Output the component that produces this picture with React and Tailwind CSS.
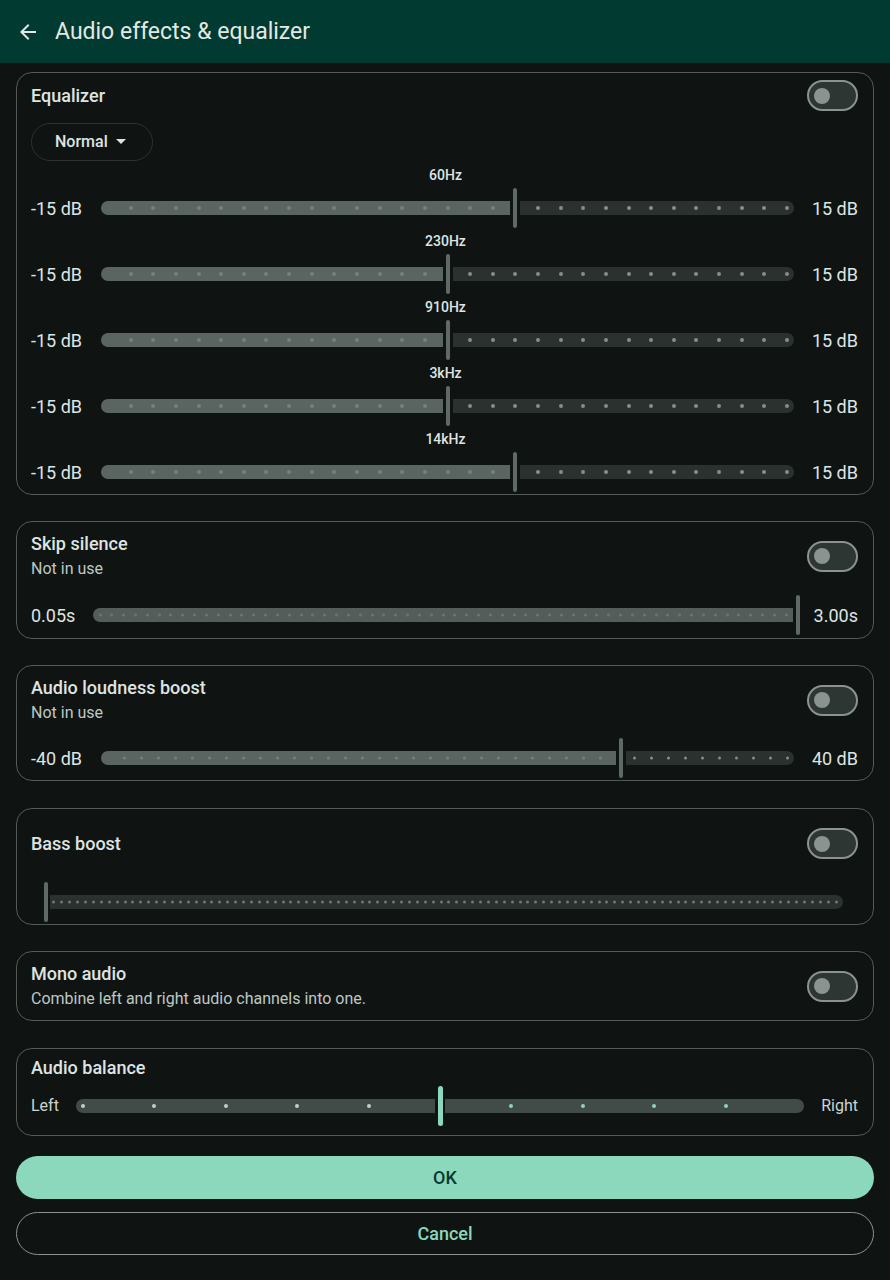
import React from "react";

function Slider({
  frac,
  steps,
  leftTrack,
  rightTrack,
  leftDot,
  rightDot,
  handleColor,
  handleW = 4,
  trackH = 14,
  gap = 5,
  dotSize = 4,
  hideFirst = false,
  hideLast = false,
}) {
  const pos = (p) => `calc(7px + (100% - 14px) * ${p})`;
  const handleIdx = Math.round(frac * steps);
  const dots = [];
  for (let i = 0; i <= steps; i++) {
    if (i === handleIdx && Math.abs(i / steps - frac) < 0.02) continue;
    if (hideFirst && i === 0) continue;
    if (hideLast && i === steps) continue;
    const p = i / steps;
    dots.push(
      <span
        key={i}
        className="absolute top-1/2 -translate-y-1/2 rounded-full"
        style={{
          left: `calc(7px + (100% - 14px) * ${p} - ${dotSize / 2}px)`,
          width: dotSize,
          height: dotSize,
          background: p < frac ? leftDot : rightDot,
        }}
      />
    );
  }
  return (
    <div className="relative h-[44px] flex-1">
      <div
        className="absolute inset-x-0 top-1/2 -translate-y-1/2"
        style={{ height: trackH }}
      >
        {frac > 0 && (
          <div
            className="absolute left-0 top-0 bottom-0 rounded-l-full rounded-r-[2px]"
            style={{
              width: `calc(7px + (100% - 14px) * ${frac} - ${gap}px)`,
              background: leftTrack,
            }}
          />
        )}
        {frac < 1 && (
          <div
            className="absolute right-0 top-0 bottom-0 rounded-r-full rounded-l-[2px]"
            style={{
              left: `calc(7px + (100% - 14px) * ${frac} + ${gap}px)`,
              background: rightTrack,
            }}
          />
        )}
        {dots}
      </div>
      <div
        className="absolute top-1/2 h-[40px] -translate-y-1/2 rounded-full"
        style={{
          left: `calc(${pos(frac)} - ${handleW / 2}px)`,
          width: handleW,
          background: handleColor,
        }}
      />
    </div>
  );
}

function Toggle() {
  return (
    <div className="flex h-[31px] w-[51px] shrink-0 items-center rounded-full border-2 border-[#8a938f] bg-[#2e3633] pl-[5px]">
      <div className="h-[16px] w-[16px] rounded-full bg-[#8a938f]" />
    </div>
  );
}

const GRAY = {
  leftTrack: "#5a6460",
  rightTrack: "#2a312f",
  leftDot: "#76807b",
  rightDot: "#858e8a",
  handleColor: "#5f6965",
};

const bands = [
  { label: "60Hz", f: 0.6 },
  { label: "230Hz", f: 0.5 },
  { label: "910Hz", f: 0.5 },
  { label: "3kHz", f: 0.5 },
  { label: "14kHz", f: 0.6 },
];

export default function App() {
  return (
    <div
      className="min-h-[1280px] w-[890px] bg-[#0f1412] text-[#dfe4e1]"
      style={{ fontFamily: "Roboto, 'Noto Sans', sans-serif" }}
    >
      <header className="flex h-[63px] items-center bg-[#013a30] pl-[16px]">
        <svg width="24" height="24" viewBox="0 0 24 24" fill="#e3e8e5">
          <path d="M20 11H7.83l5.59-5.59L12 4l-8 8 8 8 1.41-1.41L7.83 13H20v-2z" />
        </svg>
        <h1 className="ml-[15px] text-[23px] font-normal leading-[28px] text-[#e3e8e5]">
          Audio effects &amp; equalizer
        </h1>
      </header>

      <main className="flex flex-col px-[16px] pt-[9px]">
        {/* Equalizer */}
        <section className="rounded-[16px] border border-[#515a56] pl-[14px] pr-[15px] pt-[7px]">
          <div className="flex h-[31px] items-center justify-between">
            <div className="text-[18px] font-medium leading-[22px]">Equalizer</div>
            <Toggle />
          </div>
          <div className="mt-[12px] flex h-[38px] w-[122px] items-center gap-[8px] rounded-full border border-[#2b3230] pl-[23px]">
            <span className="text-[16px] font-medium">Normal</span>
            <svg width="10" height="6" viewBox="0 0 10 6" fill="#dfe4e1">
              <path d="M0 0h10L5 5z" />
            </svg>
          </div>
          <div className="mt-[3px] flex flex-col">
            {bands.map((b) => (
              <div key={b.label} className="flex flex-col">
                <div className="flex h-[22px]">
                  <div className="w-[70px]" />
                  <div className="flex flex-1 justify-center pr-[4px]">
                    <span className="whitespace-nowrap text-[14px] font-medium leading-[22px]">
                      {b.label}
                    </span>
                  </div>
                  <div className="w-[64px]" />
                </div>
                <div className="flex h-[44px] items-center">
                  <div className="w-[70px] text-[18px]">-15 dB</div>
                  <Slider frac={b.f} steps={30} hideFirst {...GRAY} />
                  <div className="w-[64px] text-right text-[18px]">15 dB</div>
                </div>
              </div>
            ))}
          </div>
        </section>

        {/* Skip silence */}
        <section className="mt-[26px] rounded-[16px] border border-[#515a56] pb-[1px] pl-[14px] pr-[15px] pt-[11px]">
          <div className="flex items-center justify-between">
            <div>
              <div className="text-[18px] font-medium leading-[22px]">Skip silence</div>
              <div className="mt-[4px] text-[16px] leading-[20px] text-[#bec8c3]">Not in use</div>
            </div>
            <Toggle />
          </div>
          <div className="mt-[14px] flex h-[44px] items-center">
            <div className="w-[62px] text-[18px]">0.05s</div>
            <Slider
              frac={1}
              steps={59}
              leftTrack="#545d59"
              rightTrack="#2a312f"
              leftDot="#6c7571"
              rightDot="#858e8a"
              handleColor="#5f6965"
              dotSize={3}
            />
            <div className="w-[53px] text-right text-[18px]">3.00s</div>
          </div>
        </section>

        {/* Audio loudness boost */}
        <section className="mt-[26px] rounded-[16px] border border-[#515a56] pl-[14px] pr-[15px] pt-[11px]">
          <div className="flex items-center justify-between">
            <div>
              <div className="text-[18px] font-medium leading-[22px]">Audio loudness boost</div>
              <div className="mt-[4px] text-[16px] leading-[20px] text-[#bec8c3]">Not in use</div>
            </div>
            <Toggle />
          </div>
          <div className="mt-[13px] flex h-[44px] items-center">
            <div className="w-[70px] text-[18px]">-40 dB</div>
            <Slider frac={0.755} steps={40} hideFirst dotSize={3} {...GRAY} />
            <div className="w-[64px] text-right text-[18px]">40 dB</div>
          </div>
        </section>

        {/* Bass boost */}
        <section className="mt-[27px] rounded-[16px] border border-[#515a56] pl-[14px] pr-[15px] pt-[19px]">
          <div className="flex h-[31px] items-center justify-between">
            <div className="text-[18px] font-medium leading-[22px]">Bass boost</div>
            <Toggle />
          </div>
          <div className="mt-[21px] flex h-[44px] items-center pl-[8px] pr-[15px]">
            <Slider
              frac={0}
              steps={100}
              leftTrack="#5a6460"
              rightTrack="#2a312f"
              leftDot="#76807b"
              rightDot="#6f7874"
              handleColor="#5f6965"
              dotSize={3}
              gap={4}
            />
          </div>
        </section>

        {/* Mono audio */}
        <section className="mt-[26px] rounded-[16px] border border-[#515a56] pb-[11px] pl-[14px] pr-[15px] pt-[11px]">
          <div className="flex items-center justify-between">
            <div>
              <div className="text-[18px] font-medium leading-[22px]">Mono audio</div>
              <div className="mt-[4px] text-[16px] leading-[20px] text-[#bec8c3]">
                Combine left and right audio channels into one.
              </div>
            </div>
            <Toggle />
          </div>
        </section>

        {/* Audio balance */}
        <section className="mt-[27px] rounded-[16px] border border-[#515a56] pb-[7px] pl-[14px] pr-[15px] pt-[8px]">
          <div className="text-[18px] font-medium leading-[22px]">Audio balance</div>
          <div className="mt-[5px] flex h-[44px] items-center">
            <div className="w-[45px] text-[16px] text-[#ccd5d0]">Left</div>
            <Slider
              frac={0.5}
              steps={10}
              leftTrack="#414b47"
              rightTrack="#414b47"
              leftDot="#c3ccc7"
              rightDot="#8fd3bb"
              handleColor="#8bd8bd"
              handleW={5}
              gap={5}
              hideLast
            />
            <div className="w-[54px] text-right text-[16px] text-[#ccd5d0]">Right</div>
          </div>
        </section>

        <button className="mt-[20px] flex h-[43px] items-center justify-center rounded-full bg-[#8bd8bd] text-[18px] font-medium text-[#0b3a2f]">
          OK
        </button>
        <button className="mt-[13px] flex h-[43px] items-center justify-center rounded-full border-[1.5px] border-[#8a938f] text-[18px] font-medium text-[#8bd8bd]">
          Cancel
        </button>
      </main>
    </div>
  );
}
